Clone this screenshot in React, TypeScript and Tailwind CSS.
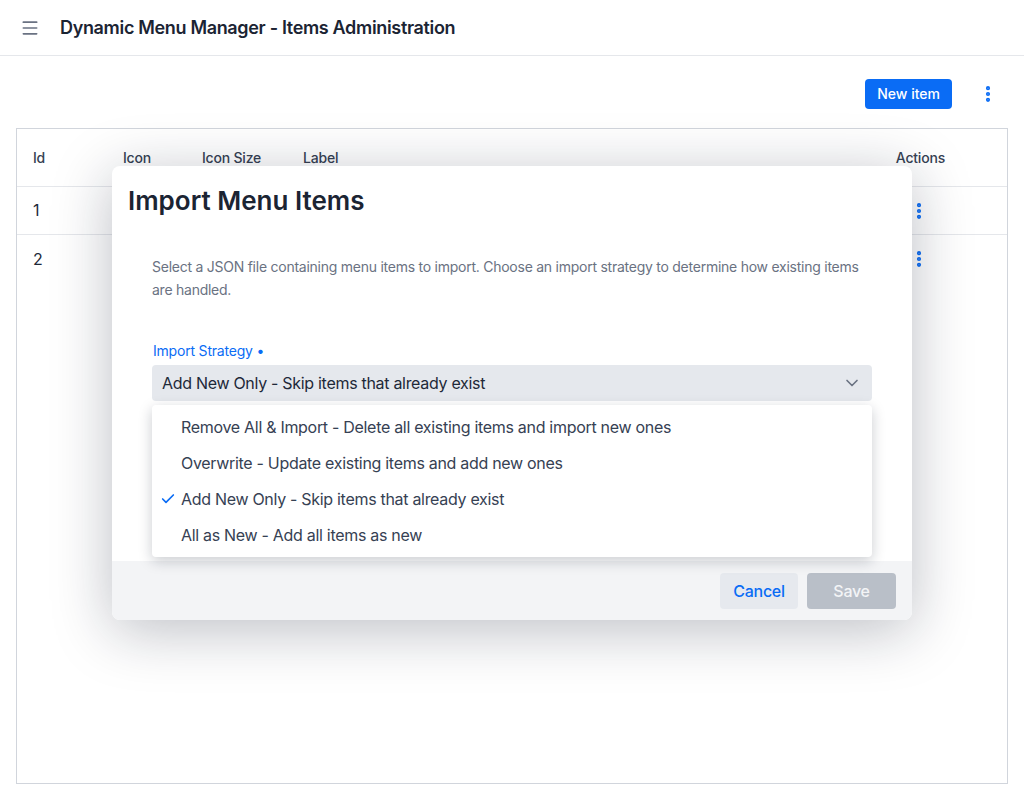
import { Check, ChevronDown, EllipsisVertical, Menu } from 'lucide-react';

const columns = [
  { label: 'Id', cls: 'w-[90px]' },
  { label: 'Icon', cls: 'w-[79px]' },
  { label: 'Icon Size', cls: 'w-[101px]' },
  { label: 'Label', cls: 'flex-1' },
];

const strategies = [
  'Remove All & Import - Delete all existing items and import new ones',
  'Overwrite - Update existing items and add new ones',
  'Add New Only - Skip items that already exist',
  'All as New - Add all items as new',
];

function Row({ id, last }: { id: number; last?: boolean }) {
  return (
    <div className={`flex h-12 items-center pl-4 pr-[78px] text-base text-gray-800 ${last ? '' : 'border-b border-gray-200'}`}>
      <span className="-mt-px flex-1">{id}</span>
      <EllipsisVertical className="h-5 w-5 text-[#0a6cf5]" strokeWidth={3} />
    </div>
  );
}

export default function App() {
  return (
    <div className="relative h-[800px] bg-white font-['Inter',sans-serif] text-gray-800">
      <header className="flex h-14 items-center gap-5 border-b border-gray-200 px-5">
        <Menu className="h-5 w-5 text-gray-500" strokeWidth={2} />
        <h1 className="mt-px text-lg font-semibold tracking-[-0.33px] text-[#1b2433]">
          Dynamic Menu Manager - Items Administration
        </h1>
      </header>

      <div className="flex h-[72px] items-center justify-end gap-[26px] pr-[26px]">
        <button className="mt-[4px] h-[30px] rounded bg-[#0a6cf5] px-[12px] text-sm font-medium text-white">
          New item
        </button>
        <EllipsisVertical className="mt-[4px] h-5 w-5 text-[#0a6cf5]" strokeWidth={3} />
      </div>

      <div className="mx-4 h-[656px] border border-gray-300">
        <div className="flex h-[58px] items-center border-b border-gray-200 pl-4 pr-[62px] text-sm font-medium tracking-[-0.2px] text-gray-700">
          {columns.map((c) => (
            <span key={c.label} className={c.cls}>
              {c.label}
            </span>
          ))}
          <span>Actions</span>
        </div>
        <Row id={1} />
        <Row id={2} last />
      </div>

      <div className="absolute left-[112px] top-[166px] flex h-[454px] w-[800px] flex-col rounded-lg bg-white shadow-[0_10px_60px_rgba(15,23,42,0.28)]">
        <h2 className="px-4 pt-[19px] text-[26px] font-semibold leading-8 text-[#1b2433]">Import Menu Items</h2>

        <div className="flex-1 px-10 pt-[38px]">
          <p className="text-sm leading-[23px] tracking-[-0.25px] text-gray-500">
            Select a JSON file containing menu items to import. Choose an import strategy to determine how existing items
            are handled.
          </p>

          <div className="relative mt-[40px]">
            <label className="block pl-px text-sm tracking-[-0.2px] text-[#0a6cf5]">Import Strategy •</label>
            <div className="mt-[4px] flex h-9 items-center justify-between rounded bg-[#e5e8ed] px-[10px] text-base tracking-[-0.3px] text-gray-800">
              <span>Add New Only - Skip items that already exist</span>
              <ChevronDown className="h-5 w-5 text-gray-500" strokeWidth={2} />
            </div>

            <div className="absolute left-0 right-0 top-[64px] z-10 rounded bg-white py-1 shadow-[0_4px_14px_rgba(15,23,42,0.22)]">
              {strategies.map((s, i) => (
                <div key={s} className="flex h-9 items-center text-base tracking-[-0.3px] text-gray-700">
                  <span className="flex w-[29px] justify-end pr-[5px]">
                    {i === 2 && <Check className="h-4 w-4 text-[#0a6cf5]" strokeWidth={2.5} />}
                  </span>
                  <span>{s}</span>
                </div>
              ))}
            </div>
          </div>
        </div>

        <div className="flex h-[59px] items-center justify-end gap-[9px] rounded-b-lg bg-[#f3f4f6] px-4">
          <button className="h-9 w-[78px] rounded bg-[#e6e9ee] text-base font-medium tracking-[-0.3px] text-[#0a6cf5]">
            Cancel
          </button>
          <button className="h-9 w-[89px] rounded bg-[#b9bfc8] text-base font-medium tracking-[-0.3px] text-gray-100">
            Save
          </button>
        </div>
      </div>
    </div>
  );
}
